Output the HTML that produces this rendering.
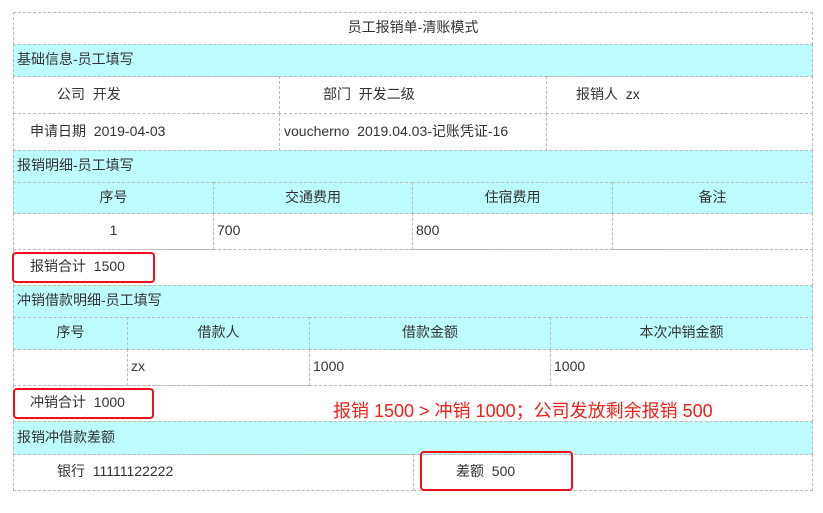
<!DOCTYPE html>
<html><head><meta charset="utf-8"><style>
body{margin:0;width:823px;height:513px;background:#fff;position:relative;overflow:hidden;font-family:"Liberation Sans","Noto Sans CJK SC",sans-serif;font-size:14px;color:#333}
.c{position:absolute;box-sizing:border-box;border:1px dashed #bbb;display:flex;align-items:center;white-space:nowrap;padding-bottom:3px}
.cy{background:#bdfdfd}
.ct{justify-content:center}
.r{position:absolute;box-sizing:border-box;border:2px solid #f0101a;border-radius:4px}
</style></head><body>
<div class="c ct" style="left:13px;top:12px;width:800px;height:33px">员工报销单-清账模式</div>
<div class="c cy" style="left:13px;top:44px;width:800px;height:33px;padding-left:3px">基础信息-员工填写</div>
<div class="c" style="left:13px;top:76px;width:267px;height:38px;padding-left:43px">公司&nbsp;&nbsp;开发</div>
<div class="c" style="left:279px;top:76px;width:268px;height:38px;padding-left:43px">部门&nbsp;&nbsp;开发二级</div>
<div class="c" style="left:546px;top:76px;width:267px;height:38px;padding-left:29px">报销人&nbsp;&nbsp;zx</div>
<div class="c" style="left:13px;top:113px;width:267px;height:38px;padding-left:16px">申请日期&nbsp;&nbsp;2019-04-03</div>
<div class="c" style="left:279px;top:113px;width:268px;height:38px;padding-left:4px">voucherno&nbsp;&nbsp;2019.04.03-记账凭证-16</div>
<div class="c" style="left:546px;top:113px;width:267px;height:38px"></div>
<div class="c cy" style="left:13px;top:150px;width:800px;height:33px;padding-left:3px">报销明细-员工填写</div>
<div class="c cy ct" style="left:13px;top:182px;width:201px;height:32px">序号</div>
<div class="c cy ct" style="left:213px;top:182px;width:200px;height:32px">交通费用</div>
<div class="c cy ct" style="left:412px;top:182px;width:201px;height:32px">住宿费用</div>
<div class="c cy ct" style="left:612px;top:182px;width:201px;height:32px">备注</div>
<div class="c ct" style="left:13px;top:213px;width:201px;height:37px">1</div>
<div class="c" style="left:213px;top:213px;width:200px;height:37px;padding-left:3px">700</div>
<div class="c" style="left:412px;top:213px;width:201px;height:37px;padding-left:3px">800</div>
<div class="c" style="left:612px;top:213px;width:201px;height:37px"></div>
<div class="c" style="left:13px;top:249px;width:800px;height:37px;padding-left:16px">报销合计&nbsp;&nbsp;1500</div>
<div class="c cy" style="left:13px;top:285px;width:800px;height:33px;padding-left:3px">冲销借款明细-员工填写</div>
<div class="c cy ct" style="left:13px;top:317px;width:115px;height:33px">序号</div>
<div class="c cy ct" style="left:127px;top:317px;width:183px;height:33px">借款人</div>
<div class="c cy ct" style="left:309px;top:317px;width:242px;height:33px">借款金额</div>
<div class="c cy ct" style="left:550px;top:317px;width:263px;height:33px">本次冲销金额</div>
<div class="c" style="left:13px;top:349px;width:115px;height:37px"></div>
<div class="c" style="left:127px;top:349px;width:183px;height:37px;padding-left:3px">zx</div>
<div class="c" style="left:309px;top:349px;width:242px;height:37px;padding-left:3px">1000</div>
<div class="c" style="left:550px;top:349px;width:263px;height:37px;padding-left:3px">1000</div>
<div class="c" style="left:13px;top:385px;width:800px;height:37px;padding-left:16px">冲销合计&nbsp;&nbsp;1000</div>
<div style="position:absolute;left:333px;top:397px;color:#f0201a;font-size:18px;white-space:nowrap">报销 1500 &gt; 冲销 1000；公司发放剩余报销 500</div>
<div class="c cy" style="left:13px;top:421px;width:800px;height:34px;padding-left:3px">报销冲借款差额</div>
<div class="c" style="left:13px;top:454px;width:401px;height:37px;padding-left:43px">银行&nbsp;&nbsp;11111122222</div>
<div class="c" style="left:413px;top:454px;width:400px;height:37px;padding-left:42px">差额&nbsp;&nbsp;500</div>
<div class="r" style="left:12px;top:252px;width:143px;height:31px"></div>
<div class="r" style="left:13px;top:388px;width:141px;height:31px"></div>
<div class="r" style="left:420px;top:451px;width:153px;height:40px"></div>
</body></html>
